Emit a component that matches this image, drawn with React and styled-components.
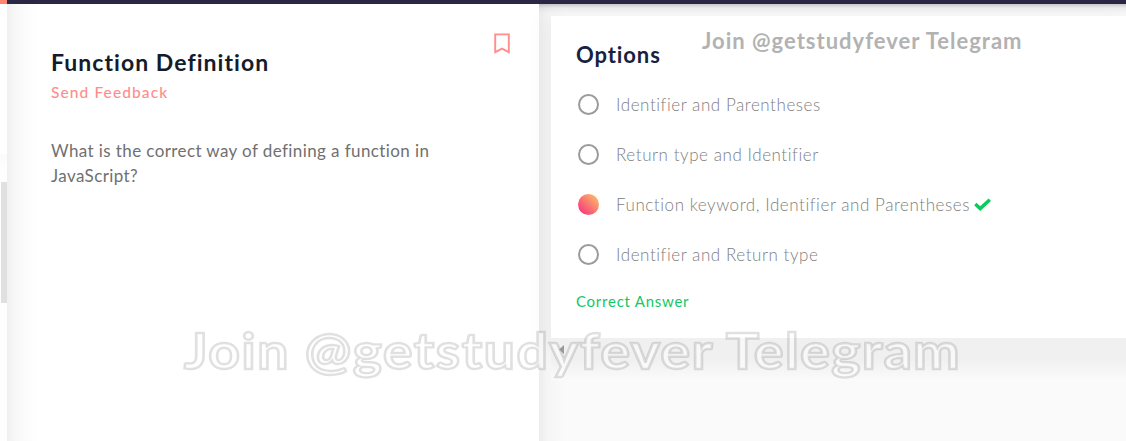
import React from "react";
import styled, { createGlobalStyle } from "styled-components";

const GlobalStyle = createGlobalStyle`
  * { box-sizing: border-box; }
  body { margin: 0; background: #fff; font-family: Lato, "Noto Sans", sans-serif; overflow: hidden; }
  h1, h2, p { margin: 0; }
`;
const Page = styled.div`
  position: relative;
  display: flex;
  flex-direction: column;
  width: 1126px;
  height: 441px;
  overflow: hidden;
`;
const TopBar = styled.header`
  display: flex;
  flex: 0 0 4px;
  background: #2a2646;
`;
const TopAccent = styled.div`
  width: 7px;
  background: #ff8571;
`;
const Columns = styled.main`
  display: flex;
  flex: 1;
`;
const Gutter = styled.aside`
  width: 7px;
  padding: 178px 0 0 1px;
  background: linear-gradient(#fff 150px, #fafafa 150px, #fefefe 166px);
`;
const Thumb = styled.div`
  height: 121px;
  background: #e0e0e0;
`;
const Question = styled.section`
  display: flex;
  align-items: flex-start;
  justify-content: space-between;
  width: 532px;
  padding: 28px 28px 0 44px;
  background: linear-gradient(90deg, #f0f0f0, #f7f7f7 8px, #fcfcfc 20px, #fff 32px);
`;
const QuestionText = styled.div`
  display: flex;
  flex-direction: column;
`;
const Title = styled.h1`
  padding-top: 15px;
  font-size: 23px;
  line-height: 30px;
  font-weight: 700;
  letter-spacing: 1.05px;
  color: #141c2b;
  white-space: nowrap;
`;
const Feedback = styled.a`
  margin-top: 5px;
  font-size: 15.5px;
  line-height: 20px;
  font-weight: 500;
  letter-spacing: 1.1px;
  color: #fe8e8b;
`;
const Prompt = styled.p`
  margin-top: 36px;
  font-size: 17px;
  line-height: 25px;
  letter-spacing: 0.4px;
  color: #707070;
  white-space: nowrap;
`;
const BookmarkIcon = styled.svg`
  width: 18px;
  height: 22px;
`;
const Answers = styled.section`
  flex: 1;
  display: flex;
  flex-direction: column;
  padding: 12px 0 0 12px;
  background:
    linear-gradient(rgba(0,0,0,.2), rgba(0,0,0,.05) 4px, transparent 10px),
    linear-gradient(90deg, rgba(0,0,0,.055), rgba(0,0,0,.02) 9px, transparent 26px),
    #fafafa;
`;
const Card = styled.div`
  height: 322px;
  padding: 24px 25px 0;
  background: #fff;
  box-shadow: 0 6px 20px 6px rgba(0,0,0,.045);
`;
const CardTitle = styled.h2`
  font-size: 22px;
  line-height: 30px;
  font-weight: 700;
  letter-spacing: 0.9px;
  color: #17223f;
`;
const OptionList = styled.div`
  display: flex;
  flex-direction: column;
  padding-top: 10px;
`;
const Option = styled.div`
  display: flex;
  align-items: center;
  height: 50px;
  padding: 0 0 1px 2px;
`;
const Radio = styled.span`
  width: 21px;
  height: 21px;
  margin-right: 17px;
  border-radius: 50%;
  border: ${(p) => (p.$selected ? "0" : "2px solid #9b9b9b")};
  background: ${(p) => (p.$selected ? "linear-gradient(45deg, #f72f7c 5%, #fbc267 95%)" : "#fff")};
`;
const OptionLabel = styled.span`
  padding-top: 1px;
  font-size: 17px;
  line-height: 24px;
  font-weight: 300;
  letter-spacing: 0.56px;
  color: #808080;
  white-space: nowrap;
`;
const CheckIcon = styled.svg`
  width: 17px;
  height: 13px;
  margin: 0 0 0 4px;
`;
const Result = styled.p`
  padding-top: 11px;
  font-size: 15px;
  line-height: 20px;
  letter-spacing: 0.75px;
  color: #14c764;
`;
const ScrollTrack = styled.div`
  display: flex;
  align-items: center;
  height: 22px;
  padding-left: 8px;
  background: #f0f0f0;
`;
const ScrollArrow = styled.svg`
  position: relative;
  z-index: 2;
  width: 5px;
  height: 9px;
`;
const Fade = styled.div`
  height: 20px;
  background: linear-gradient(#f0f0f0, #fafafa);
`;
const Watermark = styled.div`
  position: absolute;
  left: ${(p) => (p.$large ? 184 : 702)}px;
  top: ${(p) => (p.$large ? 320 : 26)}px;
  font-size: ${(p) => (p.$large ? 49 : 22)}px;
  line-height: ${(p) => (p.$large ? 60 : 30)}px;
  font-weight: 700;
  letter-spacing: ${(p) => (p.$large ? 1.4 : 1)}px;
  color: ${(p) => (p.$large ? "rgba(255,255,255,.55)" : "#b2b2b2")};
  -webkit-text-stroke: ${(p) => (p.$large ? "2.4px rgba(0,0,0,.12)" : "0")};
  transform-origin: 0 50%;
  transform: ${(p) => (p.$large ? "scaleX(1.125)" : "none")};
  white-space: nowrap;
`;

const options = [
  { label: "Identifier and Parentheses" },
  { label: "Return type and Identifier" },
  { label: "Function keyword, Identifier and Parentheses", selected: true },
  { label: "Identifier and Return type" },
];

export default function App() {
  return (
    <Page>
      <GlobalStyle />
      <TopBar><TopAccent /></TopBar>
      <Columns>
        <Gutter><Thumb /></Gutter>
        <Question>
          <QuestionText>
            <Title>Function Definition</Title>
            <Feedback>Send Feedback</Feedback>
            <Prompt>What is the correct way of defining a function in<br />JavaScript?</Prompt>
          </QuestionText>
          <BookmarkIcon viewBox="0 0 18 22" fill="none" stroke="#ff8e8d" strokeWidth="1.9">
            <path d="M2.2 2.4h13.6v17.8L9 16.6l-6.8 3.6z" />
          </BookmarkIcon>
        </Question>
        <Answers>
          <Card>
            <CardTitle>Options</CardTitle>
            <OptionList>
              {options.map((o) => (
                <Option key={o.label}>
                  <Radio $selected={o.selected} />
                  <OptionLabel>{o.label}</OptionLabel>
                  {o.selected && (
                    <CheckIcon viewBox="0 0 17 13" fill="none" stroke="#0acb5c" strokeWidth="3.4">
                      <path d="M1.3 6l4.9 4.6L15.8 1.7" />
                    </CheckIcon>
                  )}
                </Option>
              ))}
            </OptionList>
            <Result>Correct Answer</Result>
          </Card>
          <ScrollTrack>
            <ScrollArrow viewBox="0 0 5 9"><path d="M5 0v9L0 4.5z" fill="#999" /></ScrollArrow>
          </ScrollTrack>
          <Fade />
        </Answers>
      </Columns>
      <Watermark>Join @getstudyfever Telegram</Watermark>
      <Watermark $large>Join @getstudyfever Telegram</Watermark>
    </Page>
  );
}
